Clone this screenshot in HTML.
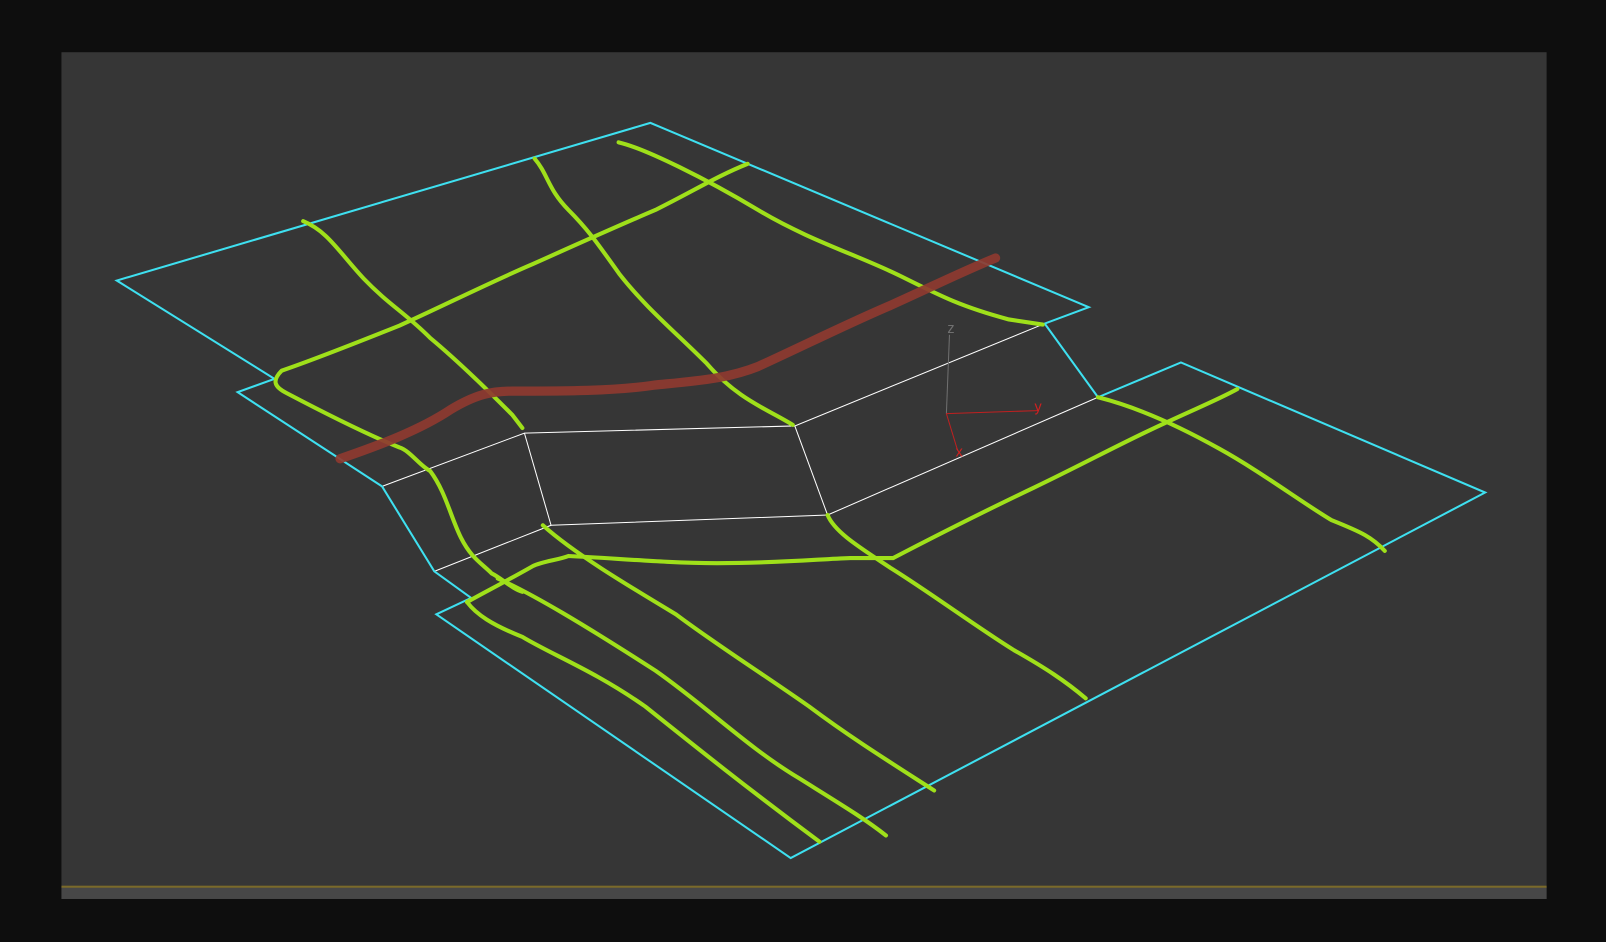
<!DOCTYPE html>
<html><head><style>
html,body{margin:0;padding:0;background:#0e0e0e;width:1606px;height:942px;overflow:hidden}
svg{display:block}
</style></head><body>
<svg width="1606" height="942" viewBox="0 0 1568 920" preserveAspectRatio="none" xmlns="http://www.w3.org/2000/svg">
<rect width="1568" height="920" fill="#0e0e0e"/>
<rect x="60" y="51" width="1450" height="827" fill="#363636"/>
<rect x="60" y="866" width="1450" height="12" fill="#474747"/>
<rect x="60" y="865" width="1450" height="2" fill="#7a6a2a"/>
<g fill="none" stroke="#ffffff" stroke-width="1">
<path d="M1020 316 L776 416 L512 423 L373 475"/>
<path d="M512 423 L538 513 L424 558"/>
<path d="M776 416 L808 503 L538 513"/>
<path d="M808 503 L1072 388"/>
</g>
<path d="M114 274 L635 120 L1063 300 L1020 316 L1072 388 L1153 354 L1450 481 L772 838 L426 600 L460 584 L424 558 L373 475 L232 383 L268 370 Z" fill="none" stroke="#3ee0f0" stroke-width="2"/>
<g fill="none" stroke="#9fe01a" stroke-width="4" stroke-linecap="round" stroke-linejoin="round">
<path d="M296 216 C320 226 330 245 355 272 C380 298 395 305 420 330 C450 355 480 385 500 405 L510 418"/>
<path d="M522 155 C535 170 535 185 555 205 C575 225 585 240 605 268 C630 300 660 325 690 355 C720 390 750 400 774 415"/>
<path d="M604 139 C630 145 690 175 740 205 C790 235 840 250 880 270 C920 290 940 300 985 312 L1018 317"/>
<path d="M730 160 C700 172 680 185 640 205 C600 222 560 240 520 258 C480 275 430 300 390 318 C350 334 310 350 275 362 C265 372 268 378 280 384 C320 405 360 425 390 437 C400 440 410 455 420 460 C435 480 440 505 450 525 C460 545 470 550 480 560 C490 565 500 575 510 578"/>
<path d="M456 588 C470 580 490 570 520 553 C530 548 545 547 555 543 C600 545 650 550 700 550 C760 550 800 546 830 545 L872 545"/>
<path d="M872 545 C920 520 970 495 1010 476 C1060 452 1100 430 1140 412 C1170 398 1190 390 1208 380"/>
<path d="M1072 388 C1100 395 1140 410 1190 438 C1230 460 1270 490 1300 508 C1330 520 1340 525 1352 538"/>
<path d="M808 503 C815 520 840 535 870 555 C910 580 950 610 990 635 C1020 652 1040 665 1060 682"/>
<path d="M530 513 C560 540 610 570 660 600 C700 630 740 655 790 690 C830 720 870 745 912 772"/>
<path d="M486 565 C520 580 570 610 640 655 C690 690 730 730 780 760 C820 785 845 800 865 816"/>
<path d="M456 588 C465 600 480 610 510 622 C540 640 580 655 630 690 C680 730 730 770 800 822"/>
</g>
<path d="M332 448 C370 435 410 420 440 400 C465 385 480 382 500 382 C550 382 600 382 640 376 C680 372 710 370 740 358 C790 335 830 315 870 298 C910 280 940 265 972 252" fill="none" stroke="#8e3a30" stroke-width="9" stroke-linecap="round" opacity="0.92"/>
<g stroke-width="1" fill="none">
<path d="M924 404 L927 327" stroke="#707070"/>
<path d="M924 404 L1013 401" stroke="#c02020"/>
<path d="M924 404 L935 440" stroke="#c02020"/>
</g>
<g font-family="Liberation Sans, sans-serif" font-size="14">
<text x="925" y="325" fill="#707070">z</text>
<text x="1010" y="402" fill="#d02020">y</text>
<text x="933" y="446" fill="#d02020">x</text>
</g>
</svg>
</body></html>
